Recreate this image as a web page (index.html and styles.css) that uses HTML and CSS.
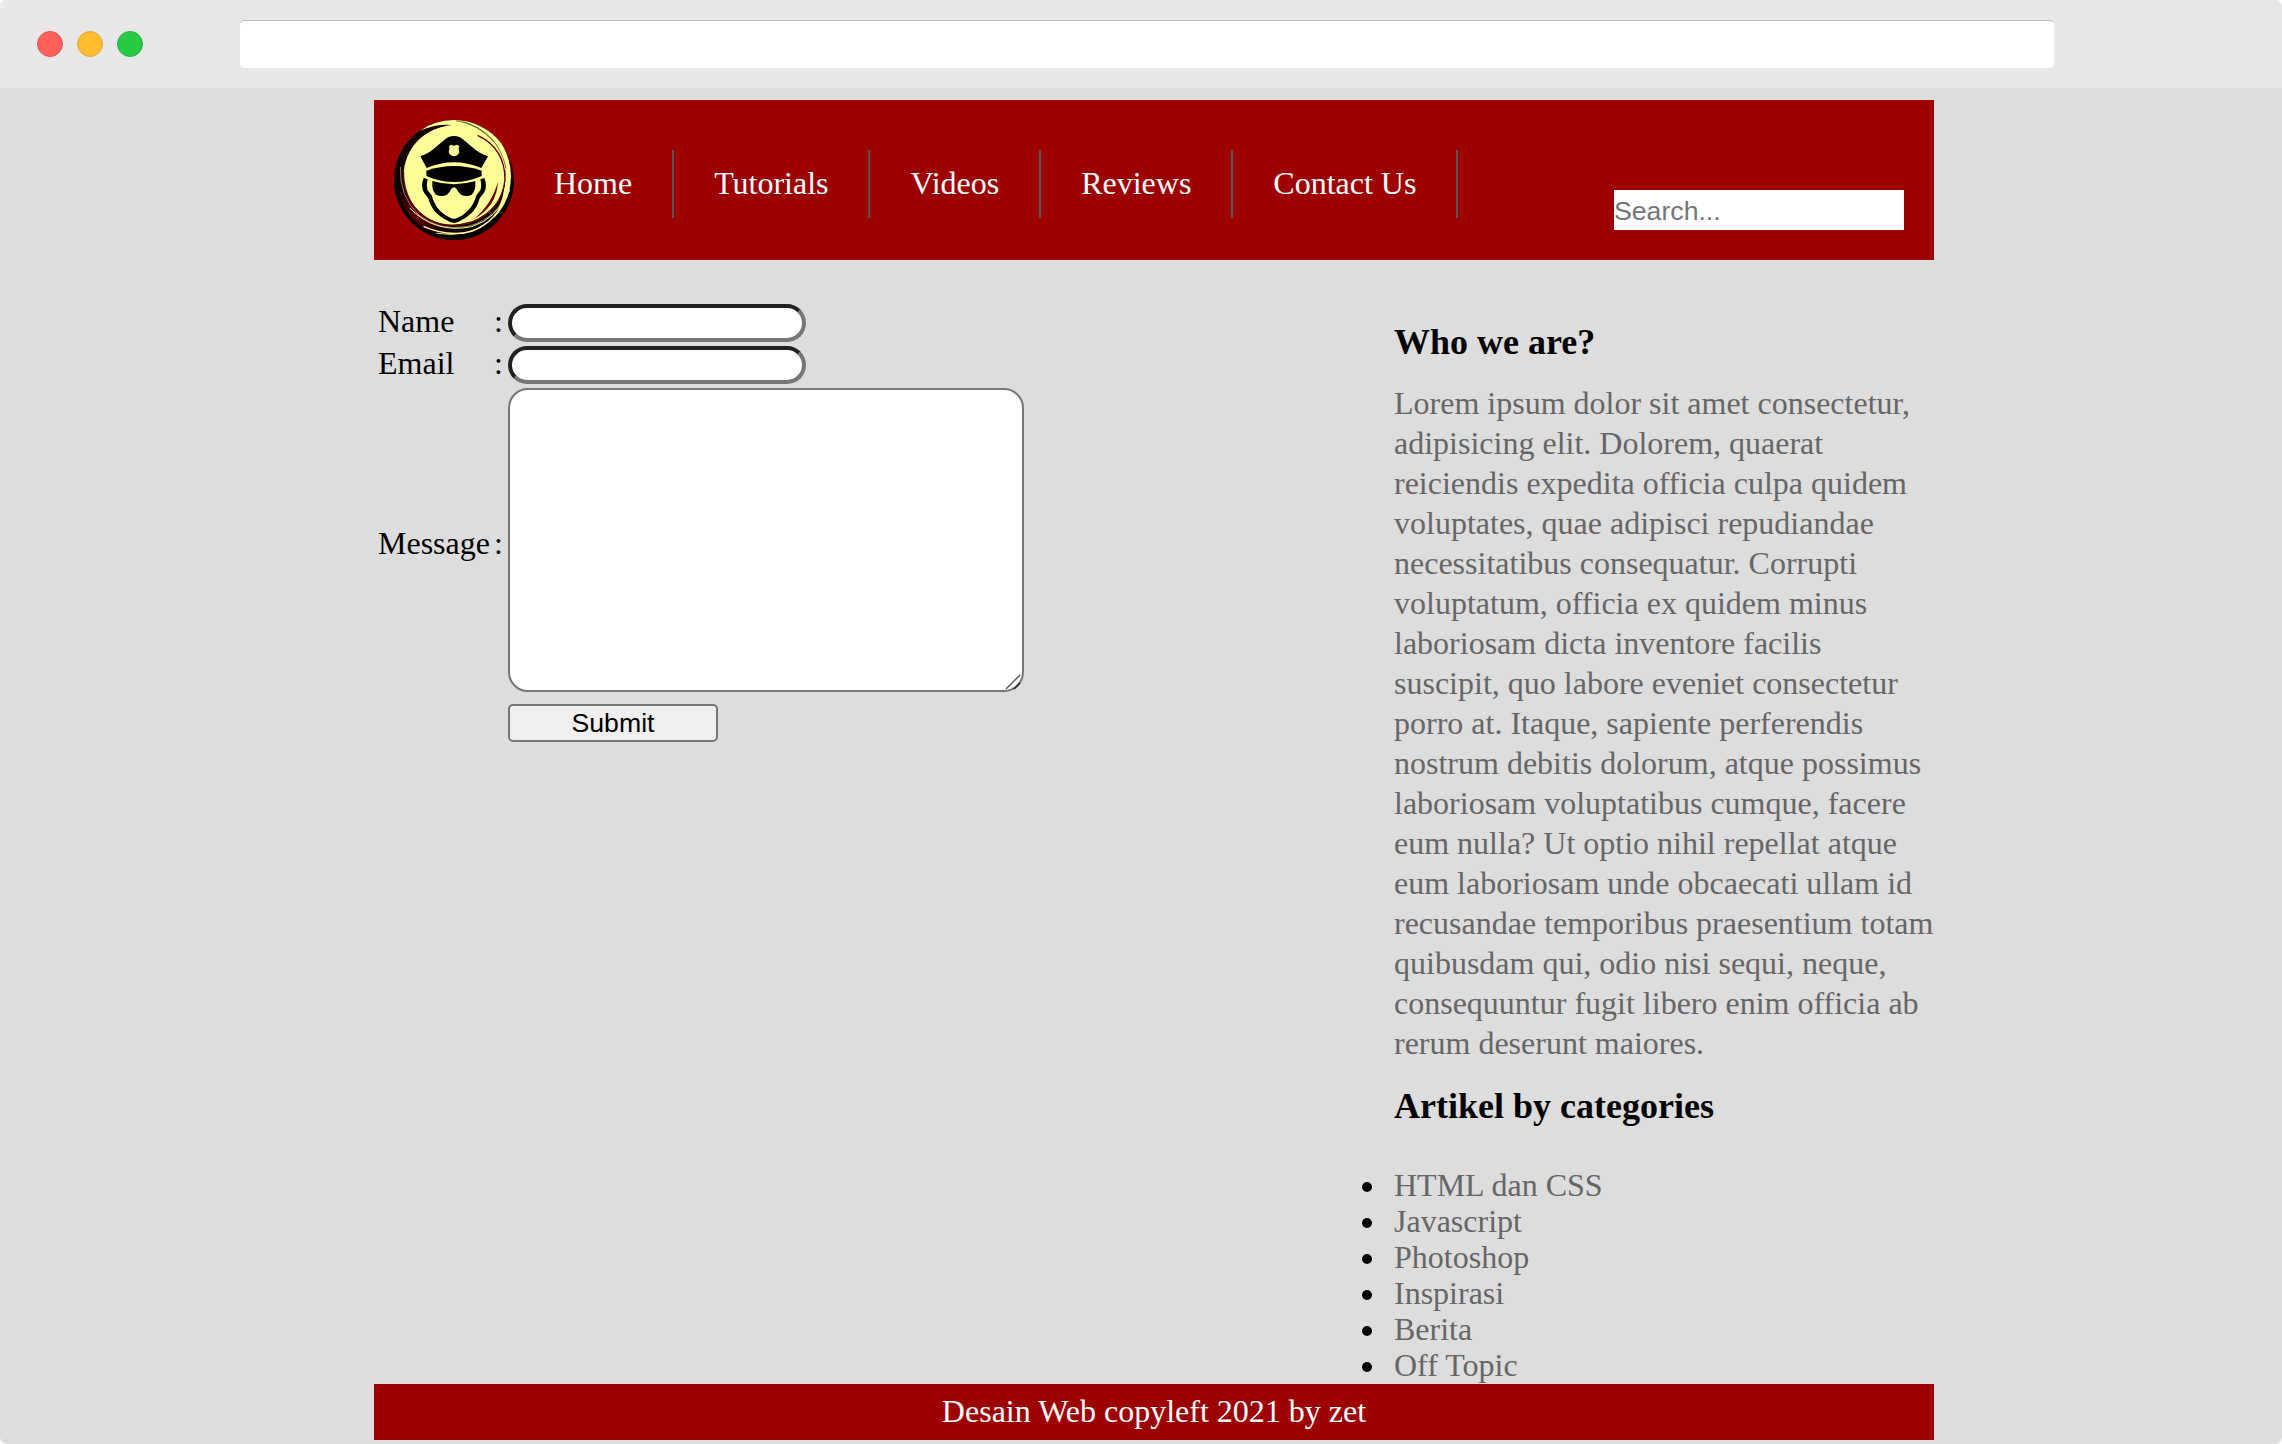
FILE: index.html
```html
<!DOCTYPE html>
<html lang="id">
<head>
<meta charset="utf-8">
<title>Contact Us</title>
<link rel="stylesheet" href="styles.css">
</head>
<body>
<div class="window">
  <div class="titlebar">
    <div class="dots"><span class="dot red"></span><span class="dot amber"></span><span class="dot green"></span></div>
    <div class="address"></div>
  </div>
  <div class="page">
    <header class="header">
      <svg class="logo" viewBox="102 90 360 360">
        <defs>
          <linearGradient id="rim" x1="102" y1="160" x2="300" y2="450" gradientUnits="userSpaceOnUse">
            <stop offset="0" stop-color="#0a0000"/><stop offset=".35" stop-color="#150000"/><stop offset=".62" stop-color="#600000"/><stop offset=".85" stop-color="#180000"/><stop offset="1" stop-color="#080000"/>
          </linearGradient>
        </defs>
        <circle cx="282" cy="270" r="180" fill="url(#rim)"/>
        <path d="M102 270A180 180 0 0 0 282 450A180 180 0 0 0 462 270L452 270A174 170 0 0 1 282 440A172 170 0 0 1 112 270Z" fill="#080000"/>
        <path d="M180 122Q225 90 282 90A180 180 0 0 1 424 160Q452 205 453 260Q452 335 400 386Q440 320 436 240L300 108Q215 105 180 122Z" fill="#ffff99"/>
        <ellipse cx="283" cy="256" rx="152" ry="150" fill="#ffff99"/>
        <path d="M275 105Q205 112 160 160Q138 188 130 225Q124 190 148 155Q195 99 275 105Z" fill="#180000"/>
        <g fill="none" stroke-linecap="round">
          <path d="M130 240Q130 350 215 393Q270 416 335 396Q425 360 435 270Q435 175 354 137" stroke="#600000" stroke-width="4"/>
          <path d="M121 232Q118 320 175 374Q235 423 320 410Q415 386 440 300" stroke="#ffff99" stroke-width="1.5"/>
          <path d="M150 355Q225 432 335 410Q410 386 443 310" stroke="#ffff99" stroke-width="3"/>
          <path d="M192 410Q265 442 335 424Q410 398 448 300" stroke="#ffff99" stroke-width="4"/>
          <path d="M230 430Q320 445 385 396" stroke="#ffff99" stroke-width="2.5"/>
          <path d="M290 93Q350 98 402 156M310 96Q415 125 438 235" stroke="#333311" stroke-width="2"/>
        </g>
        <path d="M414 275Q410 350 340 388Q394 345 414 275Z" fill="#650000"/>
        <path d="M181 199C220 187 242 155 264 142Q282 134 300 142C322 155 344 187 384 199L364 234Q282 199 200 234Z"/>
        <path d="M267 168L273 164L282 167L291 164L298 168Q294 176 298 186Q296 196 282 199Q268 196 266 186Q270 176 267 168Z" fill="#ffff99"/>
        <path d="M199 242Q282 214 365 242V258Q282 294 199 258Z"/>
        <path d="M217 273Q282 293 346 273Q348 303 335 314Q320 322 303 314Q295 308 290 297Q282 287 274 297Q269 308 261 314Q244 322 228 314Q215 303 217 273Z"/>
        <path d="M191 264L203 268Q198 286 203 301L215 316C225 352 244 370 268 382Q282 391 296 382C320 370 339 352 349 316L361 301Q366 286 361 268L373 264Q384 290 371 310L359 325C350 360 330 377 304 391Q282 407 260 391C234 377 214 360 205 325L193 310Q180 290 191 264Z"/>
      </svg>
      <nav class="nav">
        <a>Home</a><a>Tutorials</a><a>Videos</a><a>Reviews</a><a>Contact Us</a>
      </nav>
      <input class="search" type="text" placeholder="Search...">
    </header>
    <main class="content">
      <form class="form">
        <label>Name</label><span>:</span><input class="field" type="text">
        <label>Email</label><span>:</span><input class="field" type="text">
        <label class="low">Message</label><span class="low">:</span>
        <div class="message-box">
          <textarea class="message"></textarea>
          <svg class="grip" viewBox="0 0 16 16"><path d="M1 15L15 1" stroke="#555" stroke-width="1.5"/><path d="M9 15L15 9" stroke="#222" stroke-width="1.5"/></svg>
        </div>
        <button class="submit" type="button">Submit</button>
      </form>
      <aside class="side">
        <h3>Who we are?</h3>
        <p>Lorem ipsum dolor sit amet consectetur,<br>adipisicing elit. Dolorem, quaerat<br>reiciendis expedita officia culpa quidem<br>voluptates, quae adipisci repudiandae<br>necessitatibus consequatur. Corrupti<br>voluptatum, officia ex quidem minus<br>laboriosam dicta inventore facilis<br>suscipit, quo labore eveniet consectetur<br>porro at. Itaque, sapiente perferendis<br>nostrum debitis dolorum, atque possimus<br>laboriosam voluptatibus cumque, facere<br>eum nulla? Ut optio nihil repellat atque<br>eum laboriosam unde obcaecati ullam id<br>recusandae temporibus praesentium totam<br>quibusdam qui, odio nisi sequi, neque,<br>consequuntur fugit libero enim officia ab<br>rerum deserunt maiores.</p>
        <h3>Artikel by categories</h3>
        <ul>
          <li>HTML dan CSS</li><li>Javascript</li><li>Photoshop</li><li>Inspirasi</li><li>Berita</li><li>Off Topic</li>
        </ul>
      </aside>
    </main>
    <footer class="footer">Desain Web copyleft 2021 by zet</footer>
  </div>
</div>
</body>
</html>
```
FILE: styles.css
```css
* { box-sizing: border-box; }
body { margin: 0; background: #fff; font: 32px/36px "Liberation Serif", "Times New Roman", serif; color: #000; }
.window { height: 1444px; overflow: hidden; border-radius: 7px; background: #ddd; }
.titlebar { display: flex; align-items: center; height: 88px; padding-left: 37px; background: #e8e8e8; }
.dots { display: flex; gap: 14px; width: 203px; }
.dot { width: 26px; height: 26px; border-radius: 50%; border: 1px solid; }
.red { background: #ff6058; border-color: #e8504a; }
.amber { background: #ffbd2e; border-color: #e5a43a; }
.green { background: #28ca42; border-color: #20b040; }
.address { width: 1814px; height: 48px; border-radius: 4px; background: #fff; box-shadow: inset 0 1px 0 #bbb; }
.page { width: 1560px; margin: 12px 0 0 374px; }
.header { display: flex; align-items: flex-start; height: 160px; padding: 20px 30px 0 20px; background: #9d0000; }
.logo { width: 120px; height: 120px; }
.nav { display: flex; margin-top: 30px; color: #fff; }
.nav a { padding: 15px 39.95px 17px 40px; border-right: 2px solid #555; }
.nav a:last-child { padding-right: 39.4px; }
.search { width: 290px; height: 40px; margin: 70px 0 0 auto; padding: 2px 0 0; border: 0; background: #fff; font: 26.67px "Liberation Sans", Arial, sans-serif; }
.search::placeholder { color: #757575; }
.content { display: flex; justify-content: space-between; height: 1124px; }
.form { display: grid; grid-template-columns: 116px 14px auto; grid-template-rows: 38px 38px 304px 38px; row-gap: 4px; align-items: center; align-content: start; padding: 44px 0 0 4px; }
.form label, .form span { padding-bottom: 5px; }
.form .low { padding: 5px 0 0; }
.field { width: 298px; height: 38px; border: 4px inset #767676; border-radius: 20px; background: #fff; }
.message-box { position: relative; width: 516px; height: 304px; }
.message { display: block; width: 516px; height: 304px; border: 2px solid #767676; border-radius: 20px; background: #fff; resize: none; }
.grip { position: absolute; right: 3px; bottom: 2px; width: 16px; height: 16px; }
.submit { grid-column: 3; width: 210px; height: 38px; margin-top: 16px; padding: 0; border: 2px solid #767676; border-radius: 5px; background: #efefef; color: #000; font: 26.67px "Liberation Sans", Arial, sans-serif; }
.side { width: 540px; color: #666; white-space: nowrap; }
.side h3 { margin: 62px 0 21px; font-size: 36px; line-height: 40px; color: #000; }
.side p { margin: 0; line-height: 40px; }
.side p + h3 { margin: 23px 0 41px; }
.side ul { margin: 0; padding: 0; list-style: none; }
.side li { position: relative; }
.side li::before { content: ""; position: absolute; left: -32px; top: 15px; width: 10px; height: 10px; border-radius: 50%; background: #000; }
.footer { height: 56px; padding-top: 9px; background: #9d0000; color: #fff; text-align: center; }
```
